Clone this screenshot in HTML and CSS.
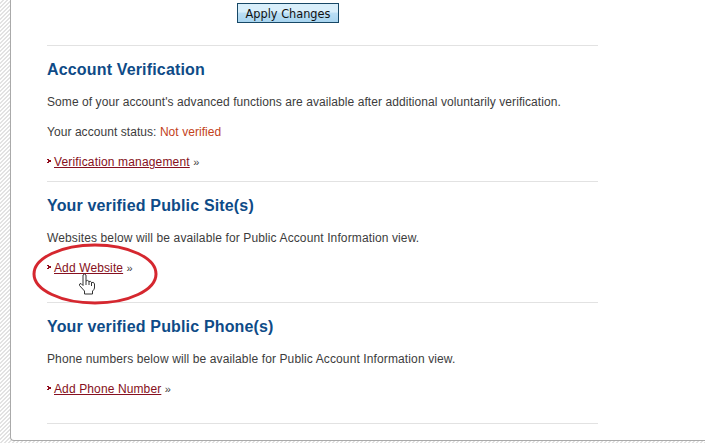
FILE: index.html
```html
<!DOCTYPE html>
<html lang="en">
<head>
<meta charset="utf-8">
<title>Account</title>
<link rel="stylesheet" href="styles.css">
</head>
<body>
<main class="panel">
  <div class="actions"><button class="apply" type="button">Apply Changes</button></div>
  <section class="section compact">
    <h2>Account Verification</h2>
    <p class="intro">Some of your account's advanced functions are available after additional voluntarily verification.</p>
    <p class="state">Your account status: <span class="status">Not verified</span></p>
    <p class="more"><svg class="arrow" viewBox="0 0 4 7"><path d="M0 1h2v1h2v2H2v1H0V4h1V2H0z"/></svg><a class="verify" href="#">Verification management</a> <span class="raquo">»</span></p>
  </section>
  <section class="section">
    <h2>Your verified Public Site(s)</h2>
    <p>Websites below will be available for Public Account Information view.</p>
    <p class="more target"><svg class="arrow" viewBox="0 0 4 7"><path d="M0 1h2v1h2v2H2v1H0V4h1V2H0z"/></svg><a href="#">Add Website</a> <span class="raquo">»</span>
      <svg class="ring" viewBox="0 0 126 62"><ellipse cx="63" cy="31" rx="61" ry="29"/></svg>
      <svg class="cursor" viewBox="0 0 18 22"><path d="M5 2Q6.500 0 8 2V8Q9.500 6.500 11 8.500Q12.500 7.500 13.500 9.500Q16 8.500 16.500 11V15Q16 17 14.500 18V21H6.500V18L1.500 12.500Q1 10.500 3 10.500L5 12.500Z"/><path d="M8 8v4M11 8.500V12M13.500 9.500V13"/></svg>
    </p>
  </section>
  <section class="section">
    <h2>Your verified Public Phone(s)</h2>
    <p>Phone numbers below will be available for Public Account Information view.</p>
    <p class="more"><svg class="arrow" viewBox="0 0 4 7"><path d="M0 1h2v1h2v2H2v1H0V4h1V2H0z"/></svg><a href="#">Add Phone Number</a> <span class="raquo">»</span></p>
  </section>
  <hr>
</main>
</body>
</html>
```
FILE: styles.css
```css
* { box-sizing: border-box; }
body {
  margin: 0;
  height: 443px;
  overflow: hidden;
  background: repeating-linear-gradient(135deg, #fff 0 1.5px, #e2e2e2 1.5px 2.83px);
  font: 12px/18px "Liberation Sans", Arial, sans-serif;
  letter-spacing: 0.12px;
  color: #3c3c3c;
}
.panel {
  height: 441px;
  margin-left: 10px;
  padding: 3px 107px 0 36px;
  background: #fff;
  border: 1px solid #aaa;
  border-width: 0 0 1px 1px;
  border-radius: 0 0 0 4px;
}
.actions { height: 42px; padding-left: 190px; }
.apply {
  display: block;
  width: 102px;
  height: 20px;
  padding: 0;
  border: 1px solid #174866;
  background: linear-gradient(#d9effb 0 45%, #bbdff5 50%, #a9d5f0);
  color: #111;
  font: 12.6px/19px "DejaVu Sans Condensed", "DejaVu Sans", sans-serif;
  letter-spacing: 0;
  white-space: nowrap;
}
.section { width: 551px; height: 121px; border-top: 1px solid #e2e2e2; padding-top: 13px; }
.section.compact { height: 136px; }
h2 { margin: 0 0 12px; font-size: 16px; line-height: 22px; letter-spacing: 0.16px; color: #0e4b87; white-space: nowrap; }
p { margin: 0 0 12px; white-space: nowrap; }
.intro { letter-spacing: 0.075px; }
.state { letter-spacing: 0.06px; }
.more { margin: 0; }
.status { color: #c3421b; }
.arrow { width: 4px; height: 7px; margin-right: 3px; vertical-align: 1px; fill: #900b1c; }
a { color: #861020; text-decoration: underline; }
.verify { letter-spacing: 0.16px; }
.raquo { font-size: 11px; }
.target { position: relative; }
.ring { position: absolute; left: -15px; top: -16px; width: 126px; height: 62px; fill: none; stroke: #d5272f; stroke-width: 3; }
.cursor { position: absolute; left: 31px; top: 14px; width: 18px; height: 22px; fill: #fff; stroke: #333; stroke-width: 1; }
hr { width: 551px; margin: 0; border: 0; border-top: 1px solid #e2e2e2; }
```
